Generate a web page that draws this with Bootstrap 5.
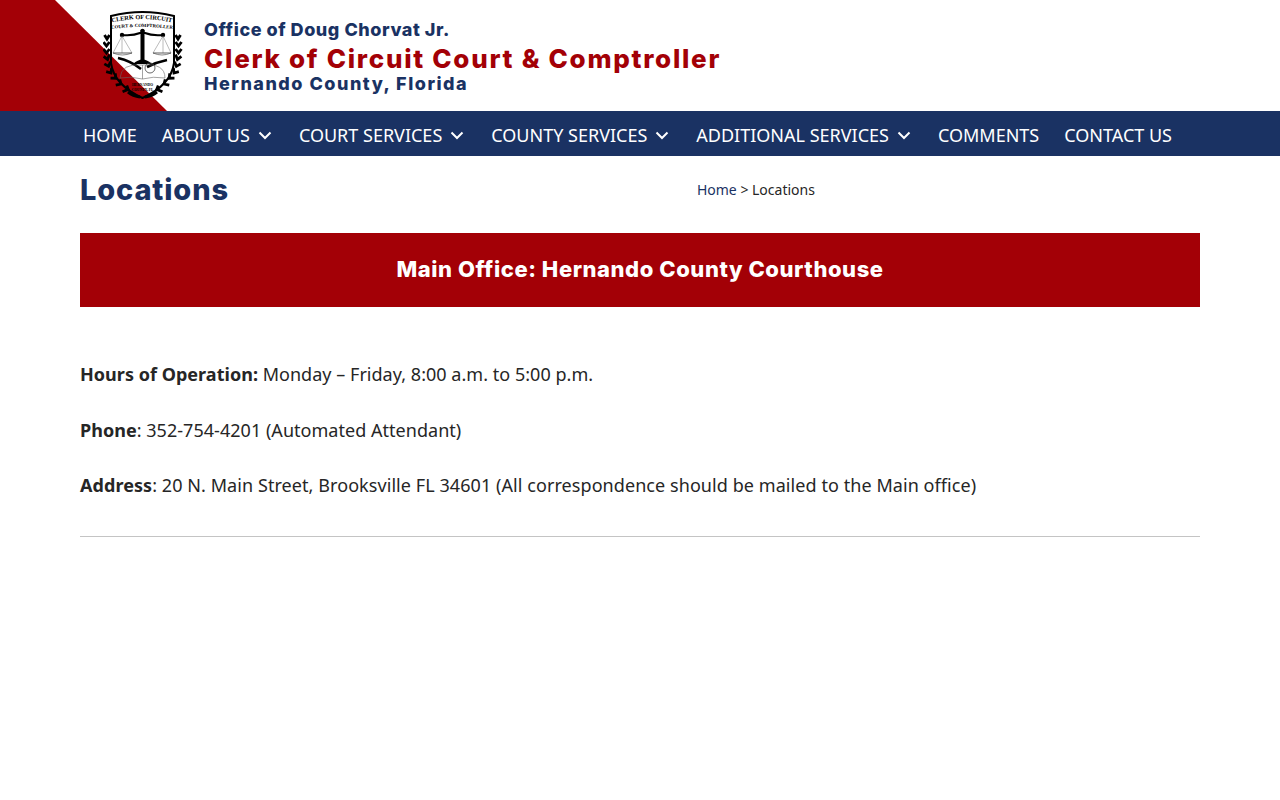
<!doctype html>
<html lang="en"><head><meta charset="utf-8"><title>Locations</title>
<link href="https://cdn.jsdelivr.net/npm/bootstrap@5.3.0/dist/css/bootstrap.min.css" rel="stylesheet">
<style>
body{font-family:"Noto Sans",sans-serif;color:#262626;background:#fff;font-size:18px;line-height:1.5}
.hdr-band{height:111px;position:relative;background:#fff;padding-left:103px;gap:21px}
.hdr-tri{position:absolute;left:0;top:0;width:167px;height:111px}
.hdr-seal{position:relative;width:80px;height:88px;margin-top:11px;flex:none}
.hdr-txt{font-family:Inter,sans-serif;font-weight:800;line-height:1;position:relative;padding-top:21px}
.hdr-a{font-size:18px;color:#1a3263;letter-spacing:.55px}
.hdr-b{font-size:26px;color:#a30006;letter-spacing:1.72px;margin-top:7px}
.hdr-c{font-size:18px;color:#1a3263;letter-spacing:1.5px;margin-top:3px}
.site-nav{background:#1a3263;height:45px;padding-left:70.5px}
.site-nav a{color:#fff;text-decoration:none;font-size:18px;padding:0 12.5px;white-space:nowrap;display:flex;align-items:center;gap:8px;height:49px}
.site-nav svg{width:14px;height:9px;margin-top:-1px;margin-right:2px}
.page-wrap{padding:0 80px}
.pg-title{font-family:Inter,sans-serif;font-weight:800;font-size:29px;color:#1a3263;margin:0;line-height:68px;letter-spacing:.85px}
.crumbs{font-size:14px;margin-left:468px;line-height:68px}
.crumbs a{color:#1a3263;text-decoration:none}
.office-bar{background:#a30006;color:#fff;font-family:Inter,sans-serif;font-weight:800;font-size:22px;letter-spacing:.56px;text-align:center;height:74px;line-height:72px;margin-top:9px;margin-bottom:54px}
.info-line{margin:0 0 28.5px;line-height:27px;letter-spacing:.03px}
.info-wide{letter-spacing:.07px}
.rule-line{border-top:1px solid #c4c4c4;margin-top:37px}
</style></head><body>
<header class="hdr-band d-flex">
<svg class="hdr-tri" viewBox="0 0 167 111"><polygon points="0,0 55,0 167,111 0,111" fill="#a30006"/></svg>
<svg class="hdr-seal" viewBox="0 0 80 88">
<defs>
<path id="arcA" d="M9 11.500Q39 4.500 69 11.500"/>
<path id="arcB" d="M8 18Q39 14 70 18"/>
<g id="wreath" fill="none" stroke="#000" stroke-width="2.800">
<path d="M1.500 24l2.500 4l2.500-4"/>
<path d="M.5 31l3 4l3-4"/>
<path d="M.5 38l3 4l3-4"/>
<path d="M1 45l3.500 3.500l2.500-4.500" transform="rotate(-8 4 48)"/>
<path d="M2 52l3.500 3.500l3-4" transform="rotate(-15 5 55)"/>
<path d="M4 59l4 3l2.500-4.500" transform="rotate(-22 8 62)"/>
<path d="M8 65l4.500 2.500l2-4.500" transform="rotate(-28 12 67)"/>
<path d="M13 71l5 2l1.500-4.500" transform="rotate(-34 18 73)"/>
<path d="M19 77l6 1.500l1-4" transform="rotate(-36 25 78)"/>
<path d="M25 81Q30 85 37 86" stroke-width="3"/>
</g>
</defs>
<use href="#wreath"/><use href="#wreath" transform="translate(79 0) scale(-1 1)"/>
<path d="M8 5Q24 1 39.500 1Q55 1 71 5L71 52Q68 74 39.500 87Q11 74 8 52Z" fill="none" stroke="#000" stroke-width="2"/>
<path d="M19 24Q30 25 37 22L42 22Q49 25 60 24" fill="none" stroke="#000" stroke-width="2.200"/>
<circle cx="19" cy="24" r="2.200" fill="#000"/><circle cx="60" cy="24" r="2.200" fill="#000"/><circle cx="39.500" cy="20" r="2.200" fill="#000"/>
<rect x="37.500" y="19" width="4" height="31" fill="#000"/><path d="M30 53Q39.500 44 49 53Z" fill="#000"/>
<path d="M19 25L10 42H29ZM60 25L50 42H68ZM19 25V42M60 25V42" fill="none" stroke="#777" stroke-width=".5"/>
<path d="M10 42Q19 46 29 42ZM50 42Q59 46 68 42Z" fill="none" stroke="#555" stroke-width=".7"/>
<path d="M15 47Q28 50 38 58" fill="none" stroke="#000" stroke-width="2.600"/>
<path d="M64 49Q54 51 44 56" fill="none" stroke="#000" stroke-width="2.800"/>
<path d="M17 67Q18 52 39.500 54Q62 52 62 67Q50 65 39.500 68Q28 65 17 67ZM39.500 54V68" fill="none" stroke="#666" stroke-width=".6"/>
<circle cx="47" cy="57" r="5" fill="none" stroke="#444" stroke-width=".8"/>
<text font-family="Liberation Serif" font-size="6.200" font-weight="700" fill="#000"><textPath href="#arcA" startOffset="50%" text-anchor="middle">CLERK OF CIRCUIT</textPath></text>
<text font-family="Liberation Serif" font-size="4.800" font-weight="700" fill="#000"><textPath href="#arcB" startOffset="50%" text-anchor="middle">COURT &amp; COMPTROLLER</textPath></text>
<text x="39.500" y="75" text-anchor="middle" font-family="Liberation Serif" font-size="3.600" font-weight="700" fill="#000">HERNANDO</text>
<text x="39.500" y="80" text-anchor="middle" font-family="Liberation Serif" font-size="3.600" font-weight="700" fill="#000">COUNTY, FL</text>
</svg>
<div class="hdr-txt"><div class="hdr-a">Office of Doug Chorvat Jr.</div><div class="hdr-b">Clerk of Circuit Court &amp; Comptroller</div><div class="hdr-c">Hernando County, Florida</div></div>
</header>
<nav class="site-nav d-flex">
<a href="#">HOME</a>
<a href="#">ABOUT US <svg viewBox="0 0 14 9"><path d="M1.500 1.500L7 7L12.500 1.500" fill="none" stroke="#fff" stroke-width="2"/></svg></a>
<a href="#">COURT SERVICES <svg viewBox="0 0 14 9"><path d="M1.500 1.500L7 7L12.500 1.500" fill="none" stroke="#fff" stroke-width="2"/></svg></a>
<a href="#">COUNTY SERVICES <svg viewBox="0 0 14 9"><path d="M1.500 1.500L7 7L12.500 1.500" fill="none" stroke="#fff" stroke-width="2"/></svg></a>
<a href="#">ADDITIONAL SERVICES <svg viewBox="0 0 14 9"><path d="M1.500 1.500L7 7L12.500 1.500" fill="none" stroke="#fff" stroke-width="2"/></svg></a>
<a href="#">COMMENTS</a>
<a href="#">CONTACT US</a>
</nav>
<main class="page-wrap">
<div class="d-flex"><h1 class="pg-title">Locations</h1><div class="crumbs"><a href="#">Home</a> &gt; Locations</div></div>
<div class="office-bar">Main Office: Hernando County Courthouse</div>
<p class="info-line"><strong>Hours of Operation:</strong> Monday – Friday, 8:00 a.m. to 5:00 p.m.</p>
<p class="info-line"><strong>Phone</strong>: 352-754-4201 (Automated Attendant)</p>
<p class="info-line info-wide"><strong>Address</strong>: 20 N. Main Street, Brooksville FL 34601 (All correspondence should be mailed to the Main office)</p>
<div class="rule-line"></div>
</main>
<script src="https://cdn.jsdelivr.net/npm/bootstrap@5.3.0/dist/js/bootstrap.bundle.min.js"></script>
</body></html>
